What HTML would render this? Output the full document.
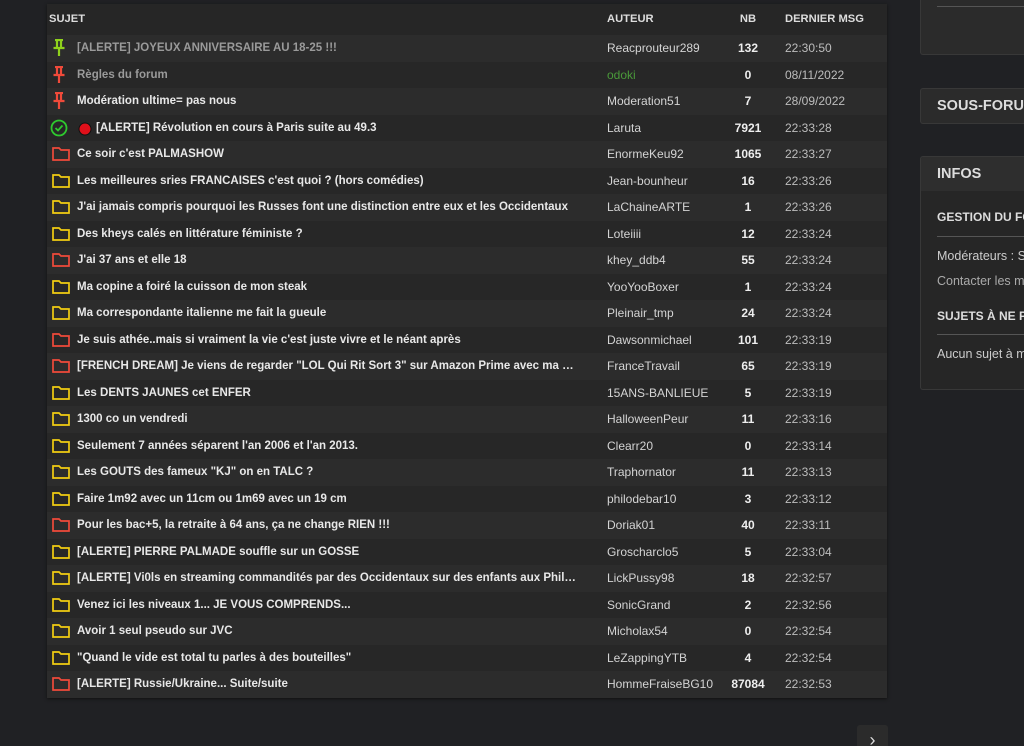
<!DOCTYPE html><html><head><meta charset="utf-8"><style>
html,body{margin:0;width:1024px;height:746px;overflow:hidden}
body{background:#202124;font-family:"Liberation Sans",sans-serif;position:relative}
.t{position:absolute;left:47px;top:4px;width:840px;height:694px;background:#272727;box-shadow:0 1px 3px #111}
.r{position:absolute;left:0;width:840px;height:26.5px;font-size:11.5px;line-height:26.5px}
.h{position:absolute;top:0;left:0;width:840px;height:32px;font-size:11.2px;font-weight:bold;color:#ddd;line-height:31px;background:#262626}
.s{position:absolute;left:30px;max-width:500px;overflow:hidden;text-overflow:ellipsis;color:#e8e8e8;font-weight:bold;white-space:nowrap}
.g{color:#9a9a9a}
.a{position:absolute;left:560px;color:#d4d4d4;font-size:12px}
.n{position:absolute;left:680px;width:42px;text-align:center;color:#eee;font-weight:bold;font-size:12px}
.d{position:absolute;left:738px;color:#bdbdbd;font-size:12px}
.i{position:absolute;left:5px;top:6px}
.p{position:absolute;left:920px;background:#2b2b2b;border:1px solid #383838;border-right:none;width:110px;border-radius:3px 0 0 3px;overflow:hidden;white-space:nowrap}
.ph{font-weight:bold;color:#ddd;font-size:14.5px;padding-left:16px}
</style></head><body>
<div class="p" style="top:-4px;height:57px"><div style="margin:9px 0 0 16px;border-top:1px solid #555"></div></div>
<div class="p" style="top:88px;height:34px"><div class="ph" style="line-height:34px">SOUS-FORUMS</div></div>
<div class="p" style="top:156px;height:232px;background:#262626">
<div class="ph" style="line-height:34px;background:#2e2e2e;height:34px">INFOS</div>
<div style="font-size:12px;font-weight:bold;color:#ddd;padding:19px 0 0 16px">GESTION DU FORUM</div>
<div style="margin:12px 0 0 16px;border-top:1px solid #555"></div>
<div style="font-size:12.5px;color:#ccc;padding:12px 0 0 16px">Modérateurs : S</div>
<div style="font-size:12.5px;color:#aaa;padding:11px 0 0 16px">Contacter les mo</div>
<div style="font-size:12px;font-weight:bold;color:#ddd;padding:21px 0 0 16px">SUJETS À NE PAS</div>
<div style="margin:11px 0 0 16px;border-top:1px solid #555"></div>
<div style="font-size:12.5px;color:#ccc;padding:12px 0 0 16px">Aucun sujet à m</div>
</div>
<div style="position:absolute;left:857px;top:725px;width:31px;height:30px;background:#2b2b2b;border-radius:3px;color:#ddd;font-size:18px;text-align:center;line-height:30px">›</div>
<div class="t">
<div class="h"><span style="position:absolute;left:2px">SUJET</span><span style="position:absolute;left:560px">AUTEUR</span><span style="position:absolute;left:680px;width:42px;text-align:center">NB</span><span style="position:absolute;left:738px">DERNIER MSG</span></div>
<div id="rows" style="position:absolute;top:31px;left:0"></div>
</div>
<script>
var R=[["pg","[ALERTE] JOYEUX ANNIVERSAIRE AU 18-25 !!!","Reacprouteur289","132","22:30:50",1],
["pr","Règles du forum","odoki","0","08/11/2022",1],
["pr","Modération ultime= pas nous","Moderation51","7","28/09/2022"],
["ok","[ALERTE] Révolution en cours à Paris suite au 49.3","Laruta","7921","22:33:28"],
["fr","Ce soir c'est PALMASHOW","EnormeKeu92","1065","22:33:27"],
["fy","Les meilleures sries FRANCAISES c'est quoi ? (hors comédies)","Jean-bounheur","16","22:33:26"],
["fy","J'ai jamais compris pourquoi les Russes font une distinction entre eux et les Occidentaux","LaChaineARTE","1","22:33:26"],
["fy","Des kheys calés en littérature féministe ?","Loteiiii","12","22:33:24"],
["fr","J'ai 37 ans et elle 18","khey_ddb4","55","22:33:24"],
["fy","Ma copine a foiré la cuisson de mon steak","YooYooBoxer","1","22:33:24"],
["fy","Ma correspondante italienne me fait la gueule","Pleinair_tmp","24","22:33:24"],
["fr","Je suis athée..mais si vraiment la vie c'est juste vivre et le néant après","Dawsonmichael","101","22:33:19"],
["fr","[FRENCH DREAM] Je viens de regarder \"LOL Qui Rit Sort 3\" sur Amazon Prime avec ma M...","FranceTravail","65","22:33:19"],
["fy","Les DENTS JAUNES cet ENFER","15ANS-BANLIEUE","5","22:33:19"],
["fy","1300 co un vendredi","HalloweenPeur","11","22:33:16"],
["fy","Seulement 7 années séparent l'an 2006 et l'an 2013.","Clearr20","0","22:33:14"],
["fy","Les GOUTS des fameux \"KJ\" on en TALC ?","Traphornator","11","22:33:13"],
["fy","Faire 1m92 avec un 11cm ou 1m69 avec un 19 cm","philodebar10","3","22:33:12"],
["fr","Pour les bac+5, la retraite à 64 ans, ça ne change RIEN !!!","Doriak01","40","22:33:11"],
["fy","[ALERTE] PIERRE PALMADE souffle sur un GOSSE","Groscharclo5","5","22:33:04"],
["fy","[ALERTE] Vi0ls en streaming commandités par des Occidentaux sur des enfants aux Phili...","LickPussy98","18","22:32:57"],
["fy","Venez ici les niveaux 1... JE VOUS COMPRENDS...","SonicGrand","2","22:32:56"],
["fy","Avoir 1 seul pseudo sur JVC","Micholax54","0","22:32:54"],
["fy","\"Quand le vide est total tu parles à des bouteilles\"","LeZappingYTB","4","22:32:54"],
["fr","[ALERTE] Russie/Ukraine... Suite/suite","HommeFraiseBG10","87084","22:32:53"]];
function ic(k){
if(k=="pg"||k=="pr"){var c=k=="pg"?"#8fd11c":"#f04a3a";return '<svg class="i" width="14" height="18" viewBox="0 0 14 18" style="top:4px"><path d="M3 1h8M5 1v7M9 1v7M1.5 9h11M7 9v8" stroke="'+c+'" stroke-width="2.2" fill="none"/></svg>';}
if(k=="ok")return '<svg class="i" style="top:4px;left:3px" width="46" height="18" viewBox="0 0 46 18"><circle cx="9" cy="9" r="7.5" stroke="#2ec92e" stroke-width="1.8" fill="none"/><path d="M5.5 9l2.5 2.5 4.5-5" stroke="#2ec92e" stroke-width="1.8" fill="none"/><circle cx="35" cy="10" r="6" fill="#e0101a" stroke="#111" stroke-width="1"/></svg>';
var c=k=="fr"?"#f04a3a":"#f2cd12";return '<svg class="i" style="top:6px" width="18" height="14" viewBox="0 0 18 14"><path d="M1 1h6l2 2h8v10H1z" stroke="'+c+'" stroke-width="1.7" fill="none"/></svg>';}
var h="";R.forEach(function(r,i){var s=r[1].replace(/&/g,"&amp;");
h+='<div class="r" style="top:'+(i*26.5)+'px;background:'+(i%2?'#272727':'#2c2c2c')+'">'+ic(r[0])+'<span class="s'+(r[5]?' g':'')+'"'+(r[0]=="ok"?' style="left:49px"':'')+'>'+s+'</span><span class="a"'+(r[2]=="odoki"?' style="color:#4a9a3a"':'')+'>'+r[2]+'</span><span class="n">'+r[3]+'</span><span class="d">'+r[4]+'</span></div>';});
document.getElementById("rows").innerHTML=h;
</script>
</body></html>
